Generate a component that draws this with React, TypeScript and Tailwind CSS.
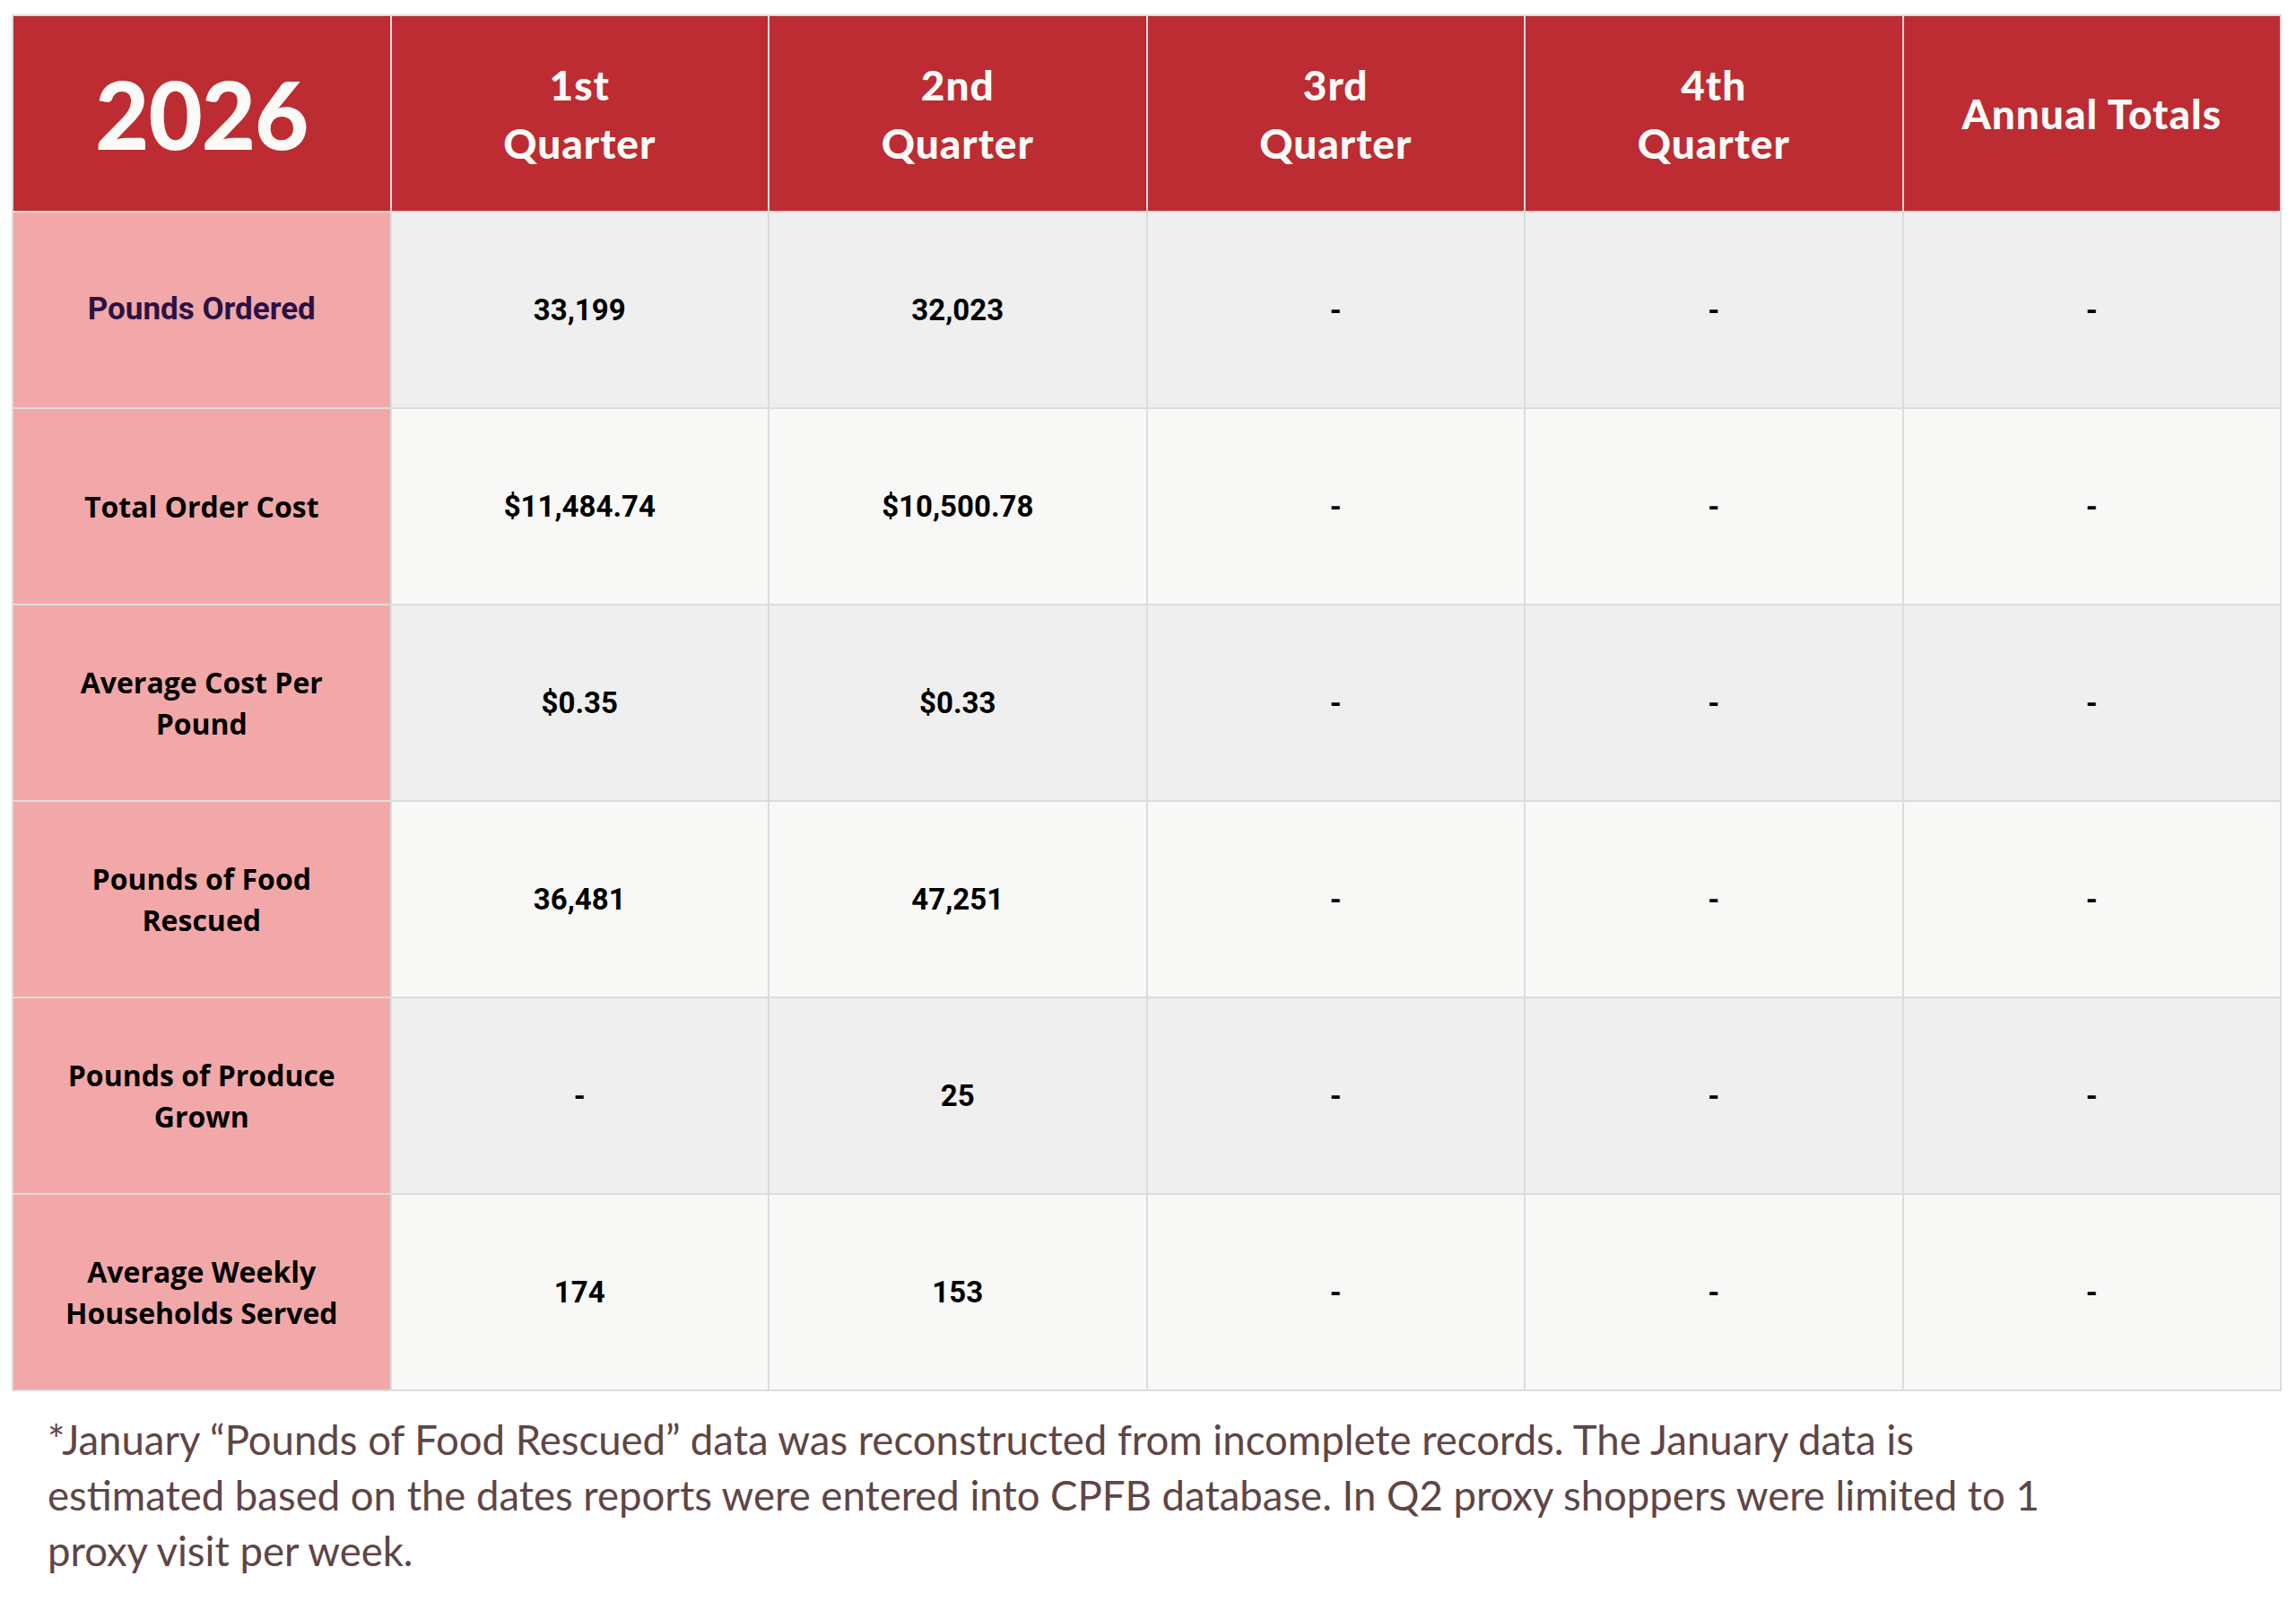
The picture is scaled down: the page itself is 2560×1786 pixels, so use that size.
const headers = [
  ["1st", "Quarter"],
  ["2nd", "Quarter"],
  ["3rd", "Quarter"],
  ["4th", "Quarter"],
  ["Annual Totals"],
];

type Row = {
  label: string[];
  accent?: boolean;
  values: string[];
};

const rows: Row[] = [
  { label: ["Pounds Ordered"], accent: true, values: ["33,199", "32,023", "-", "-", "-"] },
  { label: ["Total Order Cost"], values: ["$11,484.74", "$10,500.78", "-", "-", "-"] },
  { label: ["Average Cost Per", "Pound"], values: ["$0.35", "$0.33", "-", "-", "-"] },
  { label: ["Pounds of Food", "Rescued"], values: ["36,481", "47,251", "-", "-", "-"] },
  { label: ["Pounds of Produce", "Grown"], values: ["-", "25", "-", "-", "-"] },
  { label: ["Average Weekly", "Households Served"], values: ["174", "153", "-", "-", "-"] },
];

const headFont = "font-['Lato',_'Open_Sans',_sans-serif] font-black text-[#fbfaf7]";
const labelFont = "font-['Open_Sans',_sans-serif] font-bold text-[32px] leading-[46px] text-black";
const valueFont = "font-['Roboto',_sans-serif] font-bold";

function Cell({ className, children }: { className: string; children: React.ReactNode }) {
  return (
    <div className={`flex h-[217px] items-center justify-center text-center ${className}`}>
      {children}
    </div>
  );
}

export default function App() {
  return (
    <div className="min-h-screen bg-white">
      <div className="pl-[13px] pr-[16px] pt-[16px]">
        <div className="grid w-[2531px] grid-cols-6 gap-[2px] bg-[#dcdcdc] p-[2px]">
          <Cell className="bg-[#bc2c32]">
            <span className={`${headFont} text-[104px] leading-none tracking-[-1px]`}>2026</span>
          </Cell>
          {headers.map((lines) => (
            <Cell key={lines.join(" ")} className="bg-[#bc2c32]">
              <span className={`${headFont} text-[46px] leading-[65px] tracking-[1px]`}>
                {lines.map((line) => (
                  <span key={line} className="block">
                    {line}
                  </span>
                ))}
              </span>
            </Cell>
          ))}

          {rows.map((row, index) => {
            const stripe = index % 2 === 0 ? "bg-[#efefef]" : "bg-[#f8f8f6]";
            return [
              <Cell key={`${row.label[0]}-label`} className="bg-[#f2a8a8]">
                {row.accent ? (
                  <span className={`${valueFont} text-[35px] text-[#2a1245]`}>{row.label[0]}</span>
                ) : (
                  <span className={labelFont}>
                    {row.label.map((line) => (
                      <span key={line} className="block">
                        {line}
                      </span>
                    ))}
                  </span>
                )}
              </Cell>,
              ...row.values.map((value, col) => (
                <Cell key={`${row.label[0]}-${col}`} className={stripe}>
                  <span className={`${valueFont} text-[33px] text-black`}>{value}</span>
                </Cell>
              )),
            ];
          })}
        </div>
      </div>

      <p className="mt-[23px] pl-[53px] font-['Lato',_'Open_Sans',_sans-serif] text-[45.5px] leading-[62px] text-[#5f4545]">
        *January “Pounds of Food Rescued” data was reconstructed from incomplete records. The January data is
        <br />
        estimated based on the dates reports were entered into CPFB database. In Q2 proxy shoppers were limited to 1
        <br />
        proxy visit per week.
      </p>
    </div>
  );
}
